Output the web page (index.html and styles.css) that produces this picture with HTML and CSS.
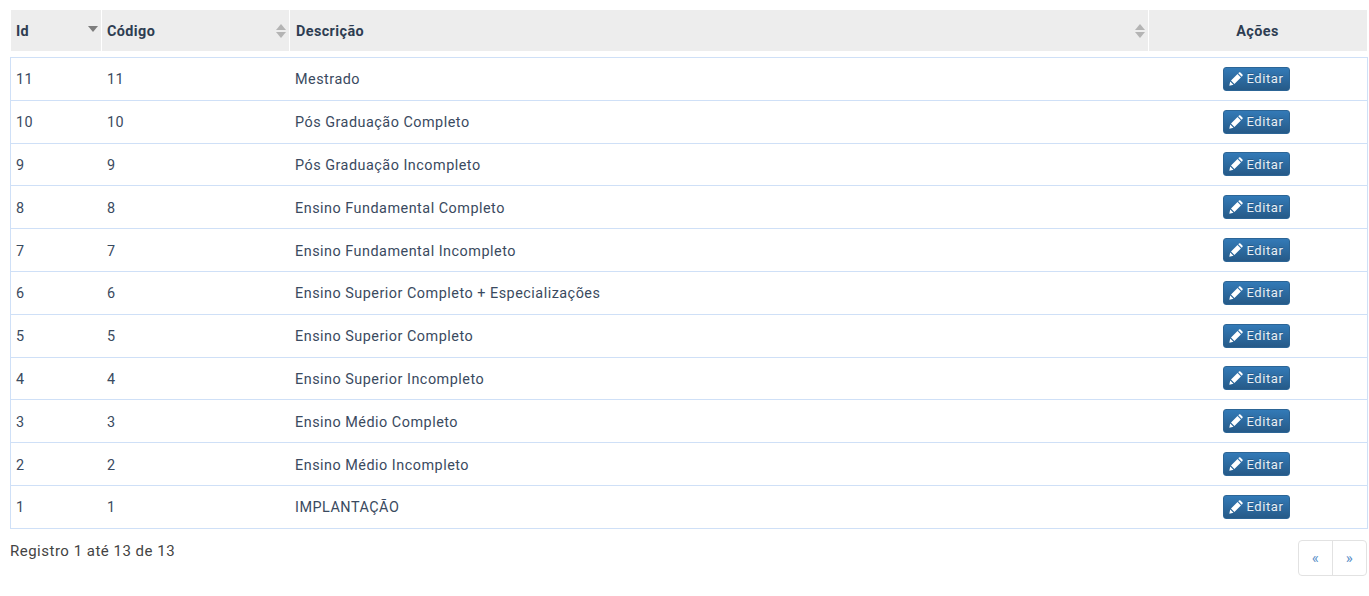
FILE: index.html
```html
<!DOCTYPE html>
<html lang="pt-BR">
<head>
<meta charset="utf-8">
<title>Escolaridade</title>
<link rel="stylesheet" href="styles.css">
</head>
<body>
<svg class="defs" width="0" height="0" aria-hidden="true">
  <symbol id="pencil" viewBox="0 0 14 14">
    <path fill="#fff" d="M0.3 13.7l0.9-4.2 3.3 3.3zM2 8.6l6.5-6.5 3.4 3.4-6.5 6.5zM9.3 1.3l0.7-0.7a1 1 0 0 1 1.4 0l2 2a1 1 0 0 1 0 1.4l-0.7 0.7z"/>
  </symbol>
</svg>
<main class="page">
  <div class="head">
    <div class="th sort">Id<i class="arrows desc"></i></div>
    <div class="th sort">Código<i class="arrows"></i></div>
    <div class="th sort wide">Descrição<i class="arrows"></i></div>
    <div class="th center">Ações</div>
  </div>
  <div class="body">
    <div class="row"><div>11</div><div>11</div><div>Mestrado</div><div class="center"><button class="btn"><svg class="ic"><use href="#pencil"/></svg>Editar</button></div></div>
    <div class="row"><div>10</div><div>10</div><div>Pós Graduação Completo</div><div class="center"><button class="btn"><svg class="ic"><use href="#pencil"/></svg>Editar</button></div></div>
    <div class="row"><div>9</div><div>9</div><div>Pós Graduação Incompleto</div><div class="center"><button class="btn"><svg class="ic"><use href="#pencil"/></svg>Editar</button></div></div>
    <div class="row"><div>8</div><div>8</div><div>Ensino Fundamental Completo</div><div class="center"><button class="btn"><svg class="ic"><use href="#pencil"/></svg>Editar</button></div></div>
    <div class="row"><div>7</div><div>7</div><div>Ensino Fundamental Incompleto</div><div class="center"><button class="btn"><svg class="ic"><use href="#pencil"/></svg>Editar</button></div></div>
    <div class="row"><div>6</div><div>6</div><div>Ensino Superior Completo + Especializações</div><div class="center"><button class="btn"><svg class="ic"><use href="#pencil"/></svg>Editar</button></div></div>
    <div class="row"><div>5</div><div>5</div><div>Ensino Superior Completo</div><div class="center"><button class="btn"><svg class="ic"><use href="#pencil"/></svg>Editar</button></div></div>
    <div class="row"><div>4</div><div>4</div><div>Ensino Superior Incompleto</div><div class="center"><button class="btn"><svg class="ic"><use href="#pencil"/></svg>Editar</button></div></div>
    <div class="row"><div>3</div><div>3</div><div>Ensino Médio Completo</div><div class="center"><button class="btn"><svg class="ic"><use href="#pencil"/></svg>Editar</button></div></div>
    <div class="row"><div>2</div><div>2</div><div>Ensino Médio Incompleto</div><div class="center"><button class="btn"><svg class="ic"><use href="#pencil"/></svg>Editar</button></div></div>
    <div class="row"><div>1</div><div>1</div><div>IMPLANTAÇÃO</div><div class="center"><button class="btn"><svg class="ic"><use href="#pencil"/></svg>Editar</button></div></div>
  </div>
  <footer class="foot">
    <div class="info">Registro 1 até 13 de 13</div>
    <nav class="pager"><a href="#">«</a><a href="#">»</a></nav>
  </footer>
</main>
</body>
</html>
```

FILE: styles.css
```css
* { box-sizing: border-box; }
html, body { margin: 0; background: #fff; }
body { font-family: Roboto, "Noto Sans", sans-serif; font-size: 14.4px; letter-spacing: 0.5px; color: #3a4a60; overflow: hidden; }
.defs { position: absolute; }
.page { padding: 10px 0 0 10px; width: 1368px; }
.head { display: grid; grid-template-columns: 91px 188px 859px 219px; height: 41px; margin-bottom: 6px; }
.th { position: relative; display: flex; align-items: center; justify-content: flex-start; background: #ededed; border-left: 1px solid #fff; padding: 2px 0 0 5px; font-weight: 700; letter-spacing: 0.4px; color: #2e3d52; }
.th.wide { padding-left: 6px; }
.th.center { justify-content: center; padding: 2px 1px 0 0; }
.arrows { position: absolute; right: 2px; top: 14px; width: 11px; height: 14px; }
.arrows::before, .arrows::after { content: ""; position: absolute; left: 0; border-left: 5.5px solid transparent; border-right: 5.5px solid transparent; }
.arrows::before { top: 0; border-bottom: 6px solid #b4b4b4; }
.arrows::after { top: 8px; border-top: 6px solid #b4b4b4; }
.arrows.desc::before { display: none; }
.arrows.desc::after { top: 2px; border-top-color: #7d7d7d; }
.body { border: 1px solid #cfe0f7; border-bottom: 0; }
.row { display: grid; grid-template-columns: 91px 188px 856px 221px; align-items: center; height: 42.8px; border-bottom: 1px solid #cfe0f7; }
.row > div { padding: 2px 0 0 5px; }
.row > .center { padding: 2px 0 0; text-align: center; }
.btn { display: inline-flex; align-items: center; justify-content: center; gap: 3px; width: 67px; height: 24px; padding: 0; border: 1px solid #2c6596; border-radius: 3px; background: linear-gradient(#337ab7, #265a88); color: #e8f0f6; font: 400 13px Roboto, sans-serif; letter-spacing: 0.6px; text-shadow: 0 -1px 0 rgba(0,0,0,.2); vertical-align: middle; position: relative; top: -1px; }
.ic { width: 14px; height: 14px; }
.foot { display: flex; justify-content: space-between; align-items: flex-start; padding-top: 11px; }
.info { font-size: 15px; line-height: 22px; color: #444; }
.pager { display: flex; border: 1px solid #e2e2e2; border-radius: 4px; height: 36px; width: 69px; margin-right: 1px; }
.pager a { flex: 1; display: flex; align-items: center; justify-content: center; color: #5a8fc8; text-decoration: none; font-size: 15px; }
.pager a + a { border-left: 1px solid #e2e2e2; }
```
